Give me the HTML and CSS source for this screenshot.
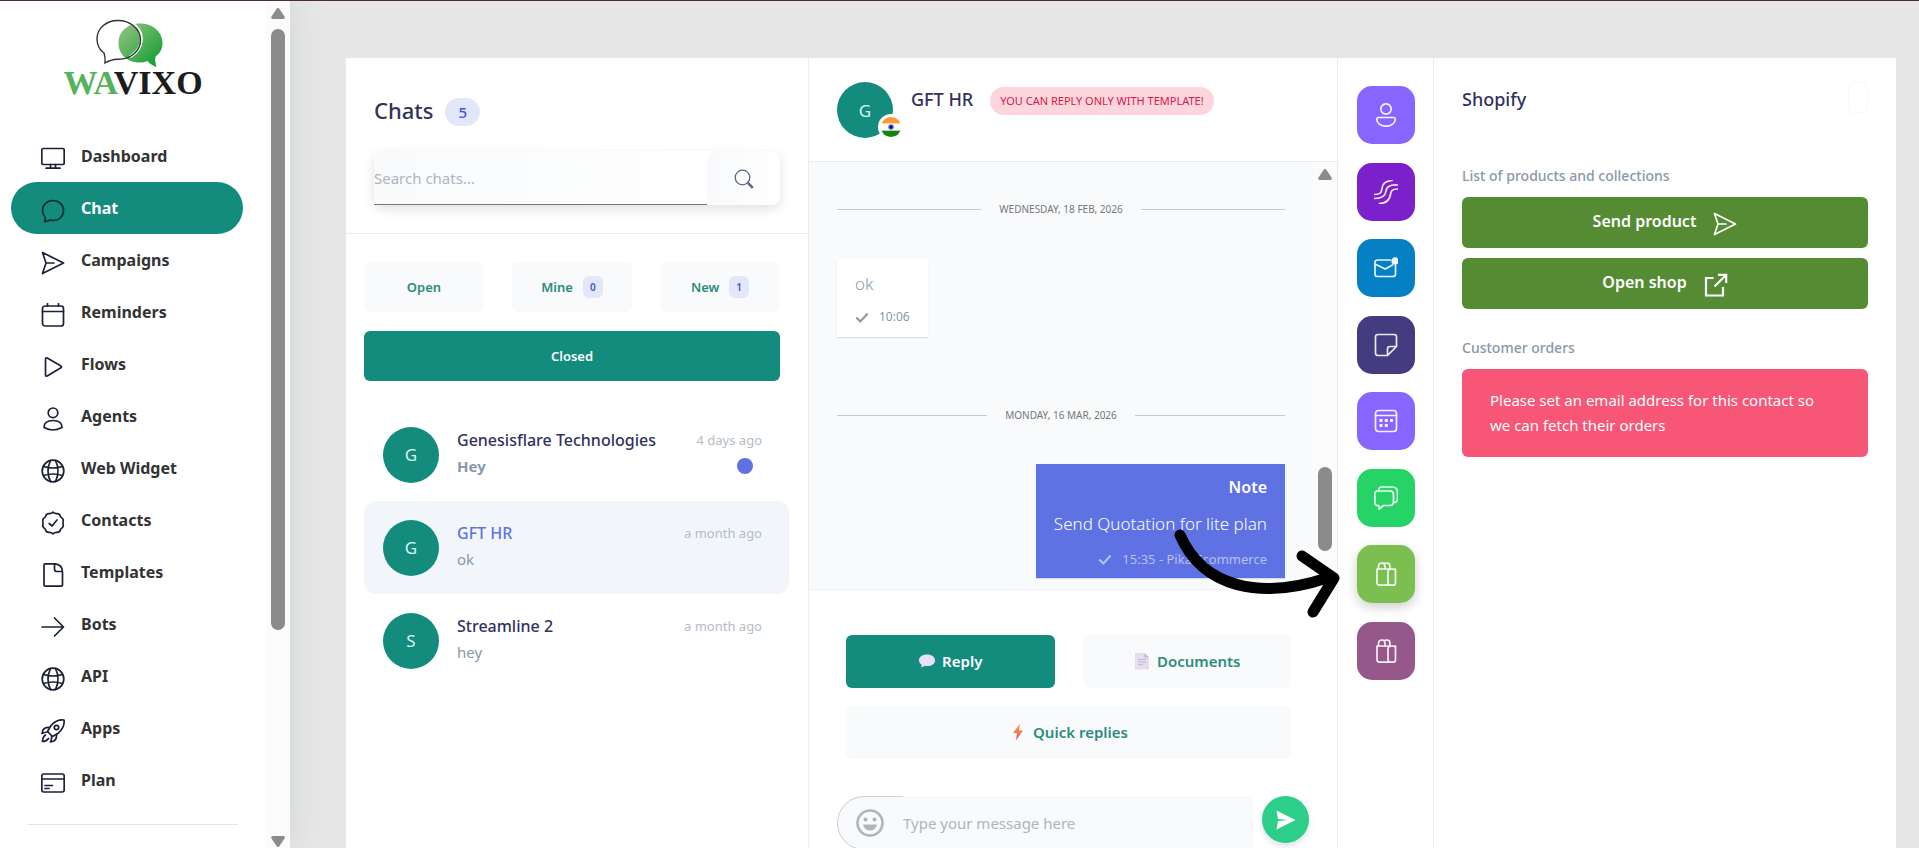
FILE: index.html
```html
<!DOCTYPE html>
<html lang="en">
<head>
    <meta charset="utf-8">
    <meta name="viewport" content="width=device-width, initial-scale=1">
    <title>Wavixo - Chat</title>

    <link rel="stylesheet" href="styles.css">
</head>
<body>

<!-- Shared icons -->
<svg class="sprite" aria-hidden="true">
    <symbol id="i-send" viewBox="0 0 24 24">
        <path d="M1.5 1.5 L22.5 12 L1.5 22.5 L5 12 Z M5 12 H13"/>
    </symbol>
    <symbol id="i-globe" viewBox="0 0 24 24">
        <circle cx="12" cy="12" r="10.8"/>
        <path d="M2.5 7.5 Q12 10.5 21.5 7.5 M2.5 16.5 Q12 13.5 21.5 16.5 M9.5 1.5 Q4.5 12 9.5 22.5 M14.5 1.5 Q19.5 12 14.5 22.5"/>
    </symbol>
    <symbol id="i-gift" viewBox="0 0 24 24">
        <path d="M3 7 H21.500 V20.500 Q21.500 23.200 19 23.200 H5.500 Q3 23.200 3 20.500 Z M21.500 9 Q21.500 7 18 7 Q14 7 14 9.500 V20.500 Q14 23.200 17 23.200"/>
        <path d="M4.500 7 V4.500 Q4.500 1 8 1 Q11 1 11 4.500 V7 M9.500 1.500 Q11 1 13 1 Q16 1 16 4.500 V7"/>
    </symbol>
    <symbol id="i-check" viewBox="0 0 16 12">
        <path d="M1.5 6 L6 10.5 L14.5 1.5"/>
    </symbol>
</svg>

<div class="app">
    <aside class="sidebar">
        <div class="sidebar-content">
            <a class="logo" href="#" aria-label="Wavixo">
                <svg class="logo-mark" viewBox="0 0 68 50">
                    <defs>
                        <linearGradient id="leaf" x1="0" x2="1" y1="0" y2="1">
                            <stop offset="0.2" stop-color="#7bbd72"/>
                            <stop offset="1" stop-color="#089a2c"/>
                        </linearGradient>
                    </defs>
                    <path fill="url(#leaf)" d="M44 5.500 C57 5.500 66.500 14 66.500 25 C66.500 32 63 36 59.500 38.500 Q58.500 43 60.500 49 Q54 46.500 51.500 43 Q48 44.500 44 44.500 C31 44.500 22.500 36 22.500 25 C22.500 14 31 5.500 44 5.500 Z"/>
                    <path fill="none" stroke="#ffffff" stroke-width="3" d="M35 5 C49 12 49 30 34 39"/>
                    <path fill="none" stroke="#333333" stroke-width="1.4" d="M22 2.500 C34 2.500 44.500 10.500 44.500 22 C44.500 33 35 41.500 22 41.200 Q14 41.500 9 45 Q9.500 39 8 35 Q1 30 1 21 C1 10.500 10 2.500 22 2.500 Z"/>
                </svg>
                <span class="logo-text"><span class="logo-green">WA</span>VIXO</span>
            </a>

            <nav class="menu">
                <a href="#">
                    <svg class="icon" viewBox="0 0 24 24"><rect x="0.8" y="1.5" width="22.4" height="16" rx="1.5"/><path d="M9.5 17.500 V21 M14.5 17.500 V21 M5 21.200 H19"/></svg>
                    Dashboard
                </a>
                <a href="#" class="active">
                    <svg class="icon" viewBox="0 0 24 24"><path d="M12 1.500 C18 1.500 22.500 6 22.500 11.500 C22.500 17.500 18 21.500 12 21.500 Q10.500 21.500 9 21 Q6.500 22.800 3.500 22.600 Q5 20.500 4 18 Q1.500 15 1.500 11.500 C1.500 6 6 1.500 12 1.500 Z"/></svg>
                    Chat
                </a>
                <a href="#">
                    <svg class="icon"><use href="#i-send"/></svg>
                    Campaigns
                </a>
                <a href="#">
                    <svg class="icon" viewBox="0 0 24 24"><rect x="1.5" y="3" width="21" height="20" rx="2.5"/><path d="M1.500 8.500 H22.500 M6.500 0.500 V3 M17.500 0.500 V3"/></svg>
                    Reminders
                </a>
                <a href="#">
                    <svg class="icon" viewBox="0 0 24 24"><path d="M4.500 4.200 Q4.500 2.500 6.200 3 L20 11 Q21 12 20 12.800 L6.200 21 Q4.500 21.500 4.500 20 Z"/></svg>
                    Flows
                </a>
                <a href="#">
                    <svg class="icon" viewBox="0 0 24 24"><circle cx="12" cy="5.8" r="4.8"/><path d="M3 20.500 C3 15 7 13.500 12 13.500 C17 13.500 21 15 21 20.500 Q16 23 12 23 Q8 23 3 20.500 Z"/></svg>
                    Agents
                </a>
                <a href="#">
                    <svg class="icon"><use href="#i-globe"/></svg>
                    Web Widget
                </a>
                <a href="#">
                    <svg class="icon" viewBox="0 0 24 24"><path d="M12 1.200 Q14 3 16.200 2.600 Q18.800 2.800 19.300 5 Q20 6.800 21.600 7.600 Q22.800 9 22 12 Q22.800 15 21.600 16.400 Q20 17.200 19.300 19 Q18.800 21.200 16.200 21.400 Q14 21 12 22.800 Q10 21 7.800 21.400 Q5.200 21.200 4.700 19 Q4 17.200 2.400 16.400 Q1.200 15 2 12 Q1.200 9 2.400 7.600 Q4 6.800 4.700 5 Q5.200 2.800 7.800 2.600 Q10 3 12 1.200 Z M8.200 12.500 L11 15 L16 9"/></svg>
                    Contacts
                </a>
                <a href="#">
                    <svg class="icon" viewBox="0 0 24 24"><path d="M3 2 Q3 0.800 4.500 0.800 H14 Q21.500 1.500 21.500 9 V22 Q21.500 23.200 20 23.200 H4.500 Q3 23.200 3 22 Z M13.500 1 V6 Q13.500 8.500 16 8.500 H21.200"/></svg>
                    Templates
                </a>
                <a href="#">
                    <svg class="icon" viewBox="0 0 24 24"><path d="M1 12 H22.500 M13.500 3 L22.500 12 L13.500 21"/></svg>
                    Bots
                </a>
                <a href="#">
                    <svg class="icon"><use href="#i-globe"/></svg>
                    API
                </a>
                <a href="#">
                    <svg class="icon" viewBox="0 0 24 24"><path d="M23 1 Q24 8 17.500 14 L11.500 17.500 L6.500 12.500 L10 6.500 Q16 0 23 1 Z"/><circle cx="15.5" cy="8.5" r="2.2"/><path d="M8.500 8.500 Q4 8 2 11 L1 14.500 Q4 13 7 13 M15.500 15.500 Q16 20 13 22 L9.500 23 Q11 20 10.500 17 M4.500 16 Q1.500 18 1.500 22.500 Q5.500 22.500 7.500 19.500"/></svg>
                    Apps
                </a>
                <a href="#">
                    <svg class="icon" viewBox="0 0 24 24"><rect x="0.8" y="3" width="22.4" height="18" rx="2"/><path d="M0.800 8 H23.200 M4 14.500 H11.500 M4 17.500 H8"/></svg>
                    Plan
                </a>
            </nav>
            <hr>
        </div>
        <div class="scrollbar">
            <svg class="arrow" viewBox="0 0 14 11"><path d="M7 0 Q8 0 8.500 1 L13.800 9 Q14 11 12.500 11 H1.500 Q0 11 0.200 9 L5.500 1 Q6 0 7 0 Z"/></svg>
            <div class="track"><div class="thumb"></div></div>
            <svg class="arrow down" viewBox="0 0 14 11"><path d="M7 0 Q8 0 8.500 1 L13.800 9 Q14 11 12.500 11 H1.500 Q0 11 0.200 9 L5.500 1 Q6 0 7 0 Z"/></svg>
        </div>
    </aside>

    <main class="main">
        <div class="board">
            <!-- Chat list -->
            <section class="chats">
                <header class="chats-head">
                    <h1>Chats <span class="count">5</span></h1>
                    <form class="search">
                        <input type="text" placeholder="Search chats..." aria-label="Search chats">
                        <button type="button" aria-label="Search">
                            <svg viewBox="0 0 20 20"><circle cx="8.5" cy="8.5" r="7.3"/><path class="handle" d="M13.800 13.800 L18.800 18.800"/></svg>
                        </button>
                    </form>
                </header>

                <div class="filters">
                    <button>Open</button>
                    <button>Mine <span class="mini">0</span></button>
                    <button>New <span class="mini">1</span></button>
                    <button class="selected">Closed</button>
                </div>

                <ul class="chat-list">
                    <li>
                        <span class="avatar">G</span>
                        <div class="who">
                            <strong>Genesisflare Technologies</strong>
                            <span class="unread">Hey</span>
                        </div>
                        <div class="when">
                            <time>4 days ago</time>
                            <i class="dot"></i>
                        </div>
                    </li>
                    <li class="current">
                        <span class="avatar">G</span>
                        <div class="who">
                            <strong>GFT HR</strong>
                            <span>ok</span>
                        </div>
                        <div class="when"><time>a month ago</time></div>
                    </li>
                    <li>
                        <span class="avatar">S</span>
                        <div class="who">
                            <strong>Streamline 2</strong>
                            <span>hey</span>
                        </div>
                        <div class="when"><time>a month ago</time></div>
                    </li>
                </ul>
            </section>

            <!-- Conversation -->
            <section class="talk">
                <header class="talk-head">
                    <span class="avatar">G
                        <svg class="flag" viewBox="0 0 24 24">
                            <defs><clipPath id="round"><circle cx="12" cy="12" r="11"/></clipPath></defs>
                            <g clip-path="url(#round)">
                                <rect width="24" height="24" fill="#ffffff"/>
                                <rect width="24" height="8" fill="#ff9933"/>
                                <rect y="16" width="24" height="8" fill="#138808"/>
                            </g>
                            <circle cx="12" cy="12" r="3" fill="#5a5ab4"/>
                            <circle cx="12" cy="12" r="1.5" fill="#000080"/>
                        </svg>
                    </span>
                    <h2>GFT HR</h2>
                    <span class="warning">YOU CAN REPLY ONLY WITH TEMPLATE!</span>
                </header>

                <div class="messages">
                    <div class="feed">
                        <div class="day">WEDNESDAY, 18 FEB, 2026</div>
                        <div class="bubble">
                            <p>ok</p>
                            <small><svg class="check"><use href="#i-check"/></svg>10:06</small>
                        </div>
                        <div class="day">MONDAY, 16 MAR, 2026</div>
                        <div class="bubble note">
                            <b>Note</b>
                            <p>Send Quotation for lite plan</p>
                            <small><svg class="check"><use href="#i-check"/></svg>15:35 - Pika Ecommerce</small>
                        </div>
                    </div>
                    <div class="scrollbar">
                        <svg class="arrow" viewBox="0 0 14 11"><path d="M7 0 Q8 0 8.500 1 L13.800 9 Q14 11 12.500 11 H1.500 Q0 11 0.200 9 L5.500 1 Q6 0 7 0 Z"/></svg>
                        <div class="track"><div class="thumb low"></div></div>
                    </div>
                </div>

                <div class="modes">
                    <button class="selected">
                        <svg viewBox="0 0 18 18"><path fill="#e9e0f5" d="M9 2.500 C14 2.500 17 5 17 8.500 C17 12 14 14 9 14 Q7.500 14 6.500 13.800 Q5 15.500 3 15.500 Q4 14 3.500 12.800 Q1 11 1 8.500 C1 5 4 2.500 9 2.500 Z"/></svg>
                        Reply
                    </button>
                    <button>
                        <svg viewBox="0 0 18 18"><path fill="#e5dcf0" d="M2 1 H11.500 L16 5.500 V17.500 H2 Z"/><path fill="#c4b8d0" d="M11.500 1 L16 5.500 H11.500 Z M5 7 H13 V8 H5 Z M5 9.500 H13 V10.500 H5 Z M5 12 H10 V13 H5 Z"/></svg>
                        Documents
                    </button>
                    <button class="wide">
                        <svg viewBox="0 0 18 18">
                            <defs><linearGradient id="bolt" x1="0" x2="0" y1="0" y2="1"><stop offset="0" stop-color="#fbab3c"/><stop offset="1" stop-color="#e8505b"/></linearGradient></defs>
                            <path fill="url(#bolt)" d="M11 0.500 L4 10 H8 L7 17.500 L14 7.500 H10 Z"/>
                        </svg>
                        Quick replies
                    </button>
                </div>

                <form class="composer">
                    <div class="field">
                        <button type="button" class="emoji" aria-label="Emoji">
                            <svg viewBox="0 0 28 28"><circle cx="14" cy="14" r="12.5" fill="none" stroke="#adb5bd" stroke-width="2.6"/><circle cx="9.5" cy="10.5" r="2"/><circle cx="18.5" cy="10.5" r="2"/><path d="M7 15.500 H21 Q19.500 21.500 14 21.500 Q8.500 21.500 7 15.500 Z"/></svg>
                        </button>
                        <input type="text" placeholder="Type your message here" aria-label="Message">
                    </div>
                    <button type="button" class="send" aria-label="Send">
                        <svg viewBox="0 0 20 20"><path d="M0.500 0.500 L19.500 10 L0.500 19.500 L2 11 L12 10 L2 9 Z"/></svg>
                    </button>
                </form>
            </section>

            <!-- Tool rail -->
            <section class="rail">
                <button class="violet" aria-label="Contact"><svg class="icon" viewBox="0 0 24 24"><circle cx="12" cy="6" r="5.2"/><path d="M4.500 14.500 H19.500 Q21.200 14.500 21.200 16.500 C21.200 20 17.500 23.200 12 23.200 C6.500 23.200 2.800 20 2.800 16.500 Q2.800 14.500 4.500 14.500 Z"/></svg></button>
                <button class="purple" aria-label="Streams"><svg class="icon" viewBox="0 0 24 24"><path d="M18 0.500 C11 1 8.500 4 8 8.500 C7.500 12.500 6.500 14.500 0.500 14.500 M23.500 5 C15 4.500 12.500 7 12 11 C11.500 15.500 9 18.500 0.500 18.500 M23.500 9 C18 9 17 11 16.500 14.500 C15.500 20 12 23.500 5.500 23.500"/></svg></button>
                <button class="blue" aria-label="Email"><svg class="icon" viewBox="0 0 24 24"><path d="M16.500 4 H3.500 Q1 4 1 6.500 V18 Q1 20.500 3.500 20.500 H19 Q21.500 20.500 21.500 18 V9 M1 8 L11.200 13 L18.500 9"/><circle class="fill" cx="21" cy="5" r="2.8"/></svg></button>
                <button class="navy" aria-label="Notes"><svg class="icon" viewBox="0 0 24 24"><path d="M4 1.500 H20 Q22.500 1.500 22.500 4 V13.500 L13.500 22.500 H4 Q1.500 22.500 1.500 20 V4 Q1.500 1.500 4 1.500 Z M22.500 13.500 H16 Q13.500 13.500 13.500 16 V22.500"/></svg></button>
                <button class="violet" aria-label="Reminders"><svg class="icon" viewBox="0 0 24 24"><rect x="1.5" y="1.5" width="21" height="21" rx="3"/><path d="M1.500 6.500 H22.500"/><path class="dots" d="M5.500 11.500 h3 M10.800 11.500 h3 M16 11.500 h3 M5.500 16.500 h3 M10.800 16.500 h3"/></svg></button>
                <button class="green" aria-label="WhatsApp"><svg class="icon" viewBox="0 0 24 24"><path d="M3.500 5 H16 Q19.500 5 19.500 8.500 V16 Q19.500 19.500 16 19.500 H9.500 L5 23.500 V19.500 H3.500 Q0.800 19.500 0.800 16 V8.500 Q0.800 5 3.500 5 Z"/><path d="M4.500 5 Q4.500 1 8 1 H18 Q23.500 1 23.500 6.500 V13 Q23.500 16.500 19.500 16.500"/></svg></button>
                <button class="lime" aria-label="Shopify"><svg class="icon"><use href="#i-gift"/></svg></button>
                <button class="plum" aria-label="WooCommerce"><svg class="icon"><use href="#i-gift"/></svg></button>
            </section>

            <!-- Shopify panel -->
            <section class="shop">
                <header>
                    <h2>Shopify</h2>
                    <button class="ghost" aria-label="Close"></button>
                </header>
                <h3>List of products and collections</h3>
                <button class="shop-btn">Send product <svg class="icon"><use href="#i-send"/></svg></button>
                <button class="shop-btn">Open shop <svg class="icon bold" viewBox="0 0 24 24"><path d="M9.500 5 H2 V22.500 H19 V14 M10.500 13.500 L22 2 M14 1.800 H22.200 V10"/></svg></button>
                <h3 class="orders">Customer orders</h3>
                <p class="alert">Please set an email address for this contact so we can fetch their orders</p>
            </section>

            <!-- Hand-drawn pointer over the Shopify button -->
            <svg class="pointer" viewBox="0 0 164 84">
                <path d="M7 7 C30 60 88 72 154 50 M129 28 L161 50 L140 84"/>
            </svg>
        </div>
    </main>
</div>

</body>
</html>
```
FILE: styles.css
```css
* {
    box-sizing: border-box;
}
body {
    margin: 0;
    font-family: "Noto Sans", "Open Sans", sans-serif;
    font-size: 15px;
    color: #32325d;
    background-color: #e7e7e7;
}
h1, h2, h3, p, ul {
    margin: 0;
    padding: 0;
}
button, input {
    font: inherit;
    border: 0;
    padding: 0;
    outline: 0;
}
button {
    cursor: pointer;
}
.sprite {
    display: none;
}
.icon {
    width: 24px;
    height: 24px;
    flex: none;
    fill: none;
    stroke: currentColor;
    stroke-width: 1.7;
    stroke-linejoin: round;
    stroke-linecap: round;
}
.app {
    display: flex;
    height: 100vh;
    overflow: hidden;
    border-top: 1px solid #4b2e2b;
}

/* Sidebar */
.sidebar {
    display: flex;
    width: 290px;
    flex: none;
    background-color: #ffffff;
    box-shadow: 0 0 32px rgba(136, 152, 150, 0.25);
}
.sidebar-content {
    flex: 1;
    overflow: hidden;
}
.logo {
    display: flex;
    flex-direction: column;
    align-items: center;
    height: 129px;
    padding-top: 17px;
    text-decoration: none;
}
.logo-mark {
    width: 68px;
    height: 50px;
    margin-right: 6px;
}
.logo-text {
    font: bold 34px/30px "Liberation Serif", serif;
    color: #1c1c1c;
}
.logo-green {
    color: #55b25c;
}
.menu a {
    display: flex;
    align-items: center;
    gap: 16px;
    height: 52px;
    margin: 0 23px 0 11px;
    padding: 0 30px;
    border-radius: 26px;
    font-size: 16px;
    font-weight: 700;
    color: #333333;
    text-decoration: none;
}
.menu .icon {
    margin-top: 6px;
    color: #1a2138;
}
.menu a.active {
    background-color: #138b7d;
    color: #ffffff;
}
.menu a.active .icon {
    color: #08302f;
}
.sidebar hr {
    margin: 18px 28px;
    border: 0;
    border-top: 1px solid #e3e3e3;
}

/* Drawn scrollbars */
.scrollbar {
    display: flex;
    flex-direction: column;
    align-items: center;
    width: 24px;
    flex: none;
    background-color: #fbfbfb;
}
.arrow {
    width: 14px;
    height: 11px;
    margin: 7px 0 10px;
    fill: #8b8b8b;
}
.arrow.down {
    margin: 6px 0 1px;
    transform: rotate(180deg);
}
.track {
    flex: 1;
    width: 14px;
}
.thumb {
    height: 75%;
    border-radius: 7px;
    background-color: #8b8b8b;
}
.thumb.low {
    height: 84px;
    margin-top: 277px;
}

/* Board */
.main {
    flex: 1;
    padding: 57px 23px 0 56px;
}
.board {
    position: relative;
    display: grid;
    grid-template-columns: 463fr 529px 96px 462fr;
    height: 100%;
    background-color: #ffffff;
}
.chats, .talk, .rail {
    border-right: 1px solid #ebedef;
}
.avatar {
    display: flex;
    align-items: center;
    justify-content: center;
    width: 56px;
    height: 56px;
    flex: none;
    border-radius: 50%;
    background-color: #138b7d;
    color: #d8f5ee;
    font-size: 17px;
}

/* Chat list */
.chats-head {
    padding: 32px 28px 28px;
    border-bottom: 1px solid #e9ecef;
}
.chats h1 {
    display: flex;
    align-items: center;
    gap: 12px;
    height: 40px;
    font-size: 22px;
    font-weight: 500;
}
.count {
    margin-top: 4px;
    padding: 0 13px;
    border-radius: 14px;
    background-color: #e4e7f9;
    color: #4353d6;
    font-size: 15px;
    line-height: 28px;
}
.search {
    display: flex;
    height: 54px;
    margin-top: 21px;
    border-radius: 8px;
    box-shadow: 0 4px 12px rgba(0, 0, 0, 0.12);
}
.search input {
    flex: 1;
    min-width: 0;
    border-bottom: 1px solid #77777a;
    background: linear-gradient(90deg, #f8fafc, #ffffff);
}
.search button {
    width: 73px;
    border-radius: 8px;
    background: linear-gradient(90deg, #f8fafc, #ffffff);
}
.search svg {
    width: 20px;
    height: 20px;
    fill: none;
    stroke: #5b6780;
    stroke-width: 1.3;
    vertical-align: middle;
}
.search .handle {
    stroke-width: 2.5;
}
::placeholder {
    color: #adb5bd;
    opacity: 1;
}
.filters {
    display: grid;
    grid-template-columns: 1fr 1fr 1fr;
    gap: 19px 28px;
    padding: 28px 28px 0 18px;
}
.filters button, .modes button {
    display: flex;
    align-items: center;
    justify-content: center;
    gap: 10px;
    height: 50px;
    border-radius: 6px;
    background-color: #f8fafc;
    color: #2b8c7c;
    font-size: 13px;
    font-weight: 600;
}
.filters .selected, .modes .selected {
    background-color: #138b7d;
    color: #ffffff;
}
.filters .selected {
    grid-column: 1 / -1;
}
.mini {
    padding: 0 7px;
    border-radius: 6px;
    background-color: #e4e7f9;
    color: #4353d6;
    font-size: 10px;
    line-height: 22px;
}
.chat-list {
    margin: 27px 19px 0 18px;
    list-style: none;
}
.chat-list li {
    display: flex;
    align-items: center;
    height: 93px;
    padding: 0 27px 0 19px;
    border-radius: 12px;
}
.chat-list .current {
    background-color: #f2f6fb;
}
.who {
    display: flex;
    flex-direction: column;
    flex: 1;
    margin-left: 18px;
    padding-bottom: 4px;
    line-height: 26px;
    color: #8898aa;
}
.who strong {
    font-size: 16px;
    font-weight: 500;
    color: #32325d;
}
.current strong {
    color: #5e72e4;
}
.who .unread {
    font-weight: 700;
}
.when {
    height: 56px;
    color: #b4bcc6;
    font-size: 13px;
    line-height: 26px;
}
.dot {
    display: block;
    width: 16px;
    height: 16px;
    margin: 5px 9px 0 auto;
    border-radius: 50%;
    background-color: #5e72e4;
}

/* Conversation */
.talk {
    display: flex;
    flex-direction: column;
    min-height: 0;
}
.talk-head {
    display: flex;
    align-items: flex-start;
    height: 104px;
    flex: none;
    padding: 24px 28px;
    border-bottom: 1px solid #e9ecef;
}
.talk-head .avatar {
    position: relative;
}
.flag {
    position: absolute;
    right: -11px;
    bottom: -2px;
    width: 26px;
    height: 26px;
    border: 2px solid #ffffff;
    border-radius: 50%;
    background-color: #ffffff;
}
.talk h2, .shop h2 {
    font-size: 18px;
    font-weight: 500;
    line-height: 34px;
}
.talk h2 {
    margin: 0 17px 0 18px;
}
.warning {
    margin-top: 5px;
    padding: 0 10px;
    border-radius: 14px;
    background-color: #fdd6dd;
    color: #d9164a;
    font-size: 11px;
    line-height: 28px;
    white-space: nowrap;
}
.messages {
    display: flex;
    height: 428px;
    flex: none;
    border-bottom: 1px solid #eef0f2;
    background-color: #f8fafc;
}
.feed {
    flex: 1;
    padding: 37px 28px 0;
}
.day {
    display: flex;
    align-items: center;
    gap: 18px;
    color: #777777;
    font-size: 10px;
    line-height: 20px;
}
.day::before, .day::after {
    content: "";
    flex: 1;
    border-top: 1px solid #c6c9cc;
}
.bubble {
    width: fit-content;
    margin: 40px 0 68px;
    padding: 11px 18px 7px;
    background-color: #ffffff;
    box-shadow: 0 1px 1px rgba(0, 0, 0, 0.12);
    color: #8898aa;
}
.bubble p {
    font-size: 17px;
    font-weight: 300;
    line-height: 28px;
}
.bubble small {
    display: flex;
    align-items: center;
    justify-content: flex-end;
    gap: 10px;
    margin-top: 6px;
    font-size: 12px;
    line-height: 26px;
}
.check {
    width: 14px;
    height: 11px;
    fill: none;
    stroke: currentColor;
    stroke-width: 2.4;
}
.bubble.note {
    margin: 39px 0 0 auto;
    padding: 8px 18px 6px;
    background-color: #5e72e4;
    color: #ffffff;
    text-align: right;
}
.note b {
    display: block;
    margin-bottom: 8px;
    font-size: 16px;
    line-height: 30px;
    font-weight: 600;
}
.bubble.note small {
    margin-top: 8px;
    color: #b5c0f5;
    font-size: 13px;
}
.modes {
    display: grid;
    grid-template-columns: 1fr 1fr;
    gap: 18px 28px;
    padding: 45px 46px 0 37px;
}
.modes button {
    height: 53px;
    gap: 6px;
    padding-bottom: 2px;
    font-size: 15px;
}
.modes svg {
    width: 18px;
    height: 18px;
}
.modes .wide {
    grid-column: 1 / -1;
}
.composer {
    display: flex;
    margin-top: 37px;
    padding: 0 28px;
    gap: 9px;
}
.field {
    display: flex;
    align-items: center;
    flex: 1;
    height: 54px;
    border-radius: 27px 0 0 27px;
    background-color: #f8fafc;
}
.emoji {
    width: 66px;
    height: 54px;
    flex: none;
    padding-left: 18px;
    border: 1px solid #cad1d7;
    border-right: 0;
    border-radius: 27px 0 0 27px;
    background: none;
    text-align: left;
}
.emoji svg {
    width: 28px;
    height: 28px;
    fill: #adb5bd;
    vertical-align: middle;
}
.field input {
    flex: 1;
    min-width: 0;
    background: none;
}
.send {
    width: 47px;
    height: 47px;
    border-radius: 50%;
    background-color: #2dce89;
    box-shadow: 0 3px 6px rgba(50, 50, 93, 0.15);
}
.send svg {
    width: 20px;
    height: 20px;
    fill: #ffffff;
    vertical-align: middle;
}

/* Tool rail */
.rail {
    display: flex;
    flex-direction: column;
    align-items: center;
    justify-content: space-between;
    height: 100%;
    max-height: 790px;
    padding: 28px 0 168px;
}
.rail button {
    width: 58px;
    height: 58px;
    border-radius: 15px;
    color: rgba(255, 255, 255, 0.9);
}
.rail .icon {
    vertical-align: middle;
}
.rail .fill {
    fill: currentColor;
}
.rail .dots {
    stroke-width: 3;
    stroke-linecap: butt;
}
.violet {
    background-color: #8965ff;
}
.purple {
    background-color: #7c20cb;
}
.blue {
    background-color: #0580c4;
}
.navy {
    background-color: #443b80;
}
.green {
    background-color: #25d366;
}
.lime {
    background-color: #7abf50;
    box-shadow: 0 4px 12px rgba(0, 0, 0, 0.2);
}
.plum {
    background-color: #96588a;
}

/* Shopify panel */
.shop {
    padding: 24px 28px;
}
.shop header {
    display: flex;
    justify-content: space-between;
    height: 80px;
}
.ghost {
    width: 20px;
    height: 31px;
    border: 1px solid #f8f8f8;
    border-radius: 6px;
    background: none;
}
.shop h3 {
    color: #8898aa;
    font-size: 14px;
    font-weight: 500;
    line-height: 28px;
    margin-bottom: 7px;
}
.shop-btn {
    display: flex;
    align-items: center;
    justify-content: center;
    gap: 17px;
    width: 100%;
    height: 51px;
    margin-bottom: 10px;
    padding-bottom: 3px;
    border-radius: 6px;
    background-color: #558b32;
    color: #ffffff;
    font-size: 16px;
    font-weight: 600;
}
.shop-btn .icon {
    margin-top: 5px;
}
.shop-btn .bold {
    stroke-width: 2.2;
    stroke-linecap: butt;
    stroke-linejoin: miter;
}
.shop .orders {
    margin-top: 25px;
}
.alert {
    padding: 19px 40px 19px 28px;
    border-radius: 6px;
    background-color: #f75676;
    color: #ffffff;
    line-height: 25px;
}

.pointer {
    position: absolute;
    top: 470px;
    left: 827px;
    width: 164px;
    height: 84px;
    overflow: visible;
    fill: none;
    stroke: #000000;
    stroke-width: 11;
    stroke-linecap: round;
    stroke-linejoin: round;
}
```
